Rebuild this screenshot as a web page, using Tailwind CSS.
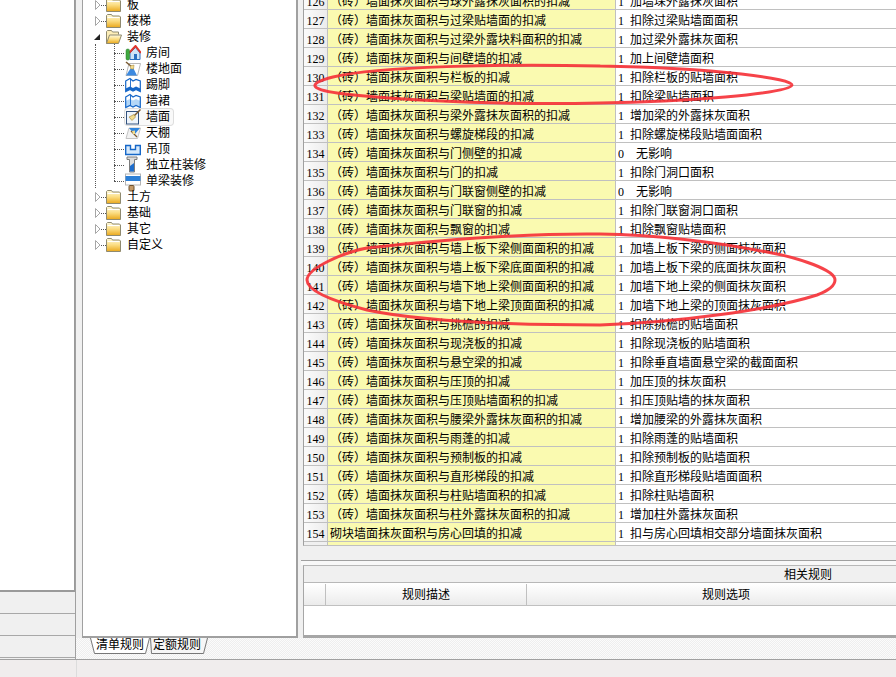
<!DOCTYPE html>
<html lang="zh-CN">
<head>
  <meta charset="UTF-8">
  <title>计算规则</title>
  <script src="https://cdn.jsdelivr.net/npm/@tailwindcss/browser@4"></script>
</head>
<body class="w-[896px] h-[677px] overflow-hidden bg-[#f0f0f0] text-black text-[12px] font-['Liberation_Serif','Noto_Sans_CJK_SC',sans-serif]">

<!-- icon defs -->
<svg class="absolute w-0 h-0">
  <defs>
    <linearGradient id="fold" x1="0" y1="0" x2="0" y2="1">
      <stop offset="0" stop-color="#fffbe0"/><stop offset="0.5" stop-color="#fbdc80"/><stop offset="1" stop-color="#eaa81c"/>
    </linearGradient>
    <symbol id="folder" viewBox="0 0 15 14">
      <path d="M0.5 3V1.5L1.5 .5H5.5L6.5 2H13.5L14.500 3V13.500H0.500Z" fill="url(#fold)" stroke="#8f8a70"/>
      <path d="M1.500 3.500H13.500" stroke="#fff"/>
    </symbol>
    <symbol id="closed" viewBox="0 0 6 10">
      <path d="M.5 .5L5 5L.5 9.500Z" fill="#fff" stroke="#a6a6a6"/>
    </symbol>
    <symbol id="panel" viewBox="0 0 16 16">
      <path d="M.7 4L5 1.500L8 4L11 2.500L15.300 4V14.500L11 12.500L8 14L5 12.500L.7 14.500Z" fill="none" stroke="#1667c8" stroke-width="1.200"/>
      <path d="M5.500 2V12.500" stroke="#1667c8" stroke-width=".9"/>
    </symbol>
  </defs>
</svg>

<div class="flex h-[659px]">
  <!-- left strip -->
  <div class="w-[76px] flex flex-col border-r border-[#a0a0a0]">
    <div class="h-[592px] bg-white border-r border-b-2 border-[#9a9a9a]"></div>
    <div class="h-[22px] border-b border-[#a8a8a8]"></div>
    <div class="h-[22px] border-b border-[#a8a8a8]"></div>
    <div class="h-[22px] border-b border-[#a8a8a8]"></div>
  </div>

  <div class="flex-1 flex flex-col min-w-0">
    <div class="flex h-[638px]">
      <div class="w-[6px] shrink-0 bg-[#f0f0f0]"></div>
      <!-- tree -->
      <div class="relative w-[216px] shrink-0 bg-white border-l border-r-2 border-b-2 border-[#a0a0a0] overflow-hidden">
        <div class="-mt-[3px] relative">
          <!-- dotted guides -->
          <div class="absolute left-[12px] top-[47px] h-[144px] border-l border-dotted border-[#555]"></div>
          <div class="absolute left-[31px] top-[47px] h-[137px] border-l border-dotted border-[#555]"></div>

          <div class="flex items-center h-4 pl-[12px]"><svg class="w-[6px] h-[10px]"><use href="#closed"/></svg><span class="w-[5px] border-t border-dotted border-[#555]"></span><svg class="w-[15px] h-[14px]"><use href="#folder"/></svg><span class="ml-[6px]">板</span></div>
          <div class="flex items-center h-4 pl-[12px]"><svg class="w-[6px] h-[10px]"><use href="#closed"/></svg><span class="w-[5px] border-t border-dotted border-[#555]"></span><svg class="w-[15px] h-[14px]"><use href="#folder"/></svg><span class="ml-[6px]">楼梯</span></div>
          <div class="flex items-center h-4 pl-[10px]">
            <svg class="w-[8px] h-[8px]" viewBox="0 0 8 8"><path d="M7 1V7H1Z" fill="#222"/></svg>
            <span class="w-[5px]"></span>
            <svg class="w-[16px] h-[14px]" viewBox="0 0 16 14"><path d="M.5 13.500V1.500L1.500 .5H5.500L6.500 2H12.500V4.500" fill="#fdeeb8" stroke="#8f8a70"/><path d="M.5 13.500L3.500 5H15.500L12.500 13.500Z" fill="url(#fold)" stroke="#8f8a70"/></svg>
            <span class="ml-[5px]">装修</span>
          </div>

          <!-- 房间 -->
          <div class="flex items-center h-4 pl-[31px]"><span class="w-[10px] border-t border-dotted border-[#555]"></span>
            <svg class="ml-[1px] w-[16px] h-[16px]" viewBox="0 0 16 16"><path d="M5 8L10.500 2.500L15 8V14.500H5Z" fill="#cfe3f7" stroke="#2a6fc0"/><path d="M4 8L10.500 1L16 8" fill="none" stroke="#e0342c" stroke-width="2"/><rect x="9" y="9" width="3" height="5.500" fill="#2a6fc0"/><rect x="1" y="4" width="3.500" height="11" rx="1.500" fill="#3fa83f" stroke="#2b7d2b" stroke-width=".5"/></svg>
            <span class="ml-[5px]">房间</span></div>
          <!-- 楼地面 -->
          <div class="flex items-center h-4 pl-[31px]"><span class="w-[10px] border-t border-dotted border-[#555]"></span>
            <svg class="ml-[1px] w-[16px] h-[16px]" viewBox="0 0 16 16"><path d="M4 2.500H15.500L12.500 14.500H1Z" fill="#fff" stroke="#b8b8b8"/><path d="M5.500 7.500H8.500L12 14.500H1Z" fill="#3d8ae0"/><path d="M1 1L7 6" stroke="#7a5a30" stroke-width="1.500"/><path d="M5 5L9 4L8.500 8L6 8Z" fill="#f2dc8e" stroke="#a08030" stroke-width=".5"/></svg>
            <span class="ml-[5px]">楼地面</span></div>
          <!-- 踢脚 -->
          <div class="flex items-center h-4 pl-[31px]"><span class="w-[10px] border-t border-dotted border-[#555]"></span>
            <svg class="ml-[1px] w-[16px] h-[16px]" viewBox="0 0 16 16"><path d="M.7 11.500L5 9.500L8 11L11 9.500L15.300 11.500V14.500L11 12.500L8 14L5 12.500L.7 14.500Z" fill="#1667c8"/><use href="#panel"/></svg>
            <span class="ml-[5px]">踢脚</span></div>
          <!-- 墙裙 -->
          <div class="flex items-center h-4 pl-[31px]"><span class="w-[10px] border-t border-dotted border-[#555]"></span>
            <svg class="ml-[1px] w-[16px] h-[16px]" viewBox="0 0 16 16"><path d="M.7 8L5 6L8 7.500L11 6L15.300 8V14.500L11 12.500L8 14L5 12.500L.7 14.500Z" fill="#b4d7f7"/><use href="#panel"/></svg>
            <span class="ml-[5px]">墙裙</span></div>
          <!-- 墙面, selected -->
          <div class="flex items-center h-4 pl-[31px]"><span class="w-[10px] border-t border-dotted border-[#555]"></span>
            <div class="ml-[1px] flex items-center h-4 pr-[3px] rounded-[3px] bg-[#f9f9f9] ring-1 ring-[#dedede]">
              <svg class="w-[16px] h-[16px]" viewBox="0 0 16 16"><rect x="1.500" y="2.500" width="12" height="12.500" fill="#eef4fb" stroke="#32527e"/><path d="M15.500 .5L9 7" stroke="#7a5a30" stroke-width="1.500"/><path d="M4 8L9 5.500L10.500 8L7 11.500Z" fill="#f2dc8e" stroke="#a08030" stroke-width=".6"/></svg>
              <span class="ml-[5px]">墙面</span>
            </div></div>
          <!-- 天棚 -->
          <div class="flex items-center h-4 pl-[31px]"><span class="w-[10px] border-t border-dotted border-[#555]"></span>
            <svg class="ml-[1px] w-[16px] h-[16px]" viewBox="0 0 16 16"><path d="M4 3H15.500L12.500 13.500H1Z" fill="#f2f2f2" stroke="#c4c4c4"/><path d="M4 3H15L9.500 9.500Z" fill="#2f85de"/><path d="M6 6L12 12" stroke="#7a5a30" stroke-width="1.200"/><path d="M7 6L10 5.500L10 9L8 9Z" fill="#f2dc8e"/></svg>
            <span class="ml-[5px]">天棚</span></div>
          <!-- 吊顶 -->
          <div class="flex items-center h-4 pl-[31px]"><span class="w-[10px] border-t border-dotted border-[#555]"></span>
            <svg class="ml-[1px] w-[16px] h-[16px]" viewBox="0 0 16 16"><path d="M.7 4.500H5.500V8.500H10.500V4.500H15.300V13.500H.7Z" fill="#d5e8fa" stroke="#1667c8" stroke-width="1.400"/></svg>
            <span class="ml-[5px]">吊顶</span></div>
          <!-- 独立柱装修 -->
          <div class="flex items-center h-4 pl-[31px]"><span class="w-[10px] border-t border-dotted border-[#555]"></span>
            <svg class="ml-[1px] w-[16px] h-[18px] overflow-visible" viewBox="0 0 16 18"><path d="M2 1H12V3.500H9.500V16H4.500V3.500H2Z" fill="#dcdcdc" stroke="#7c7c7c"/><path d="M5 10L9 7V15.500H5Z" fill="#1d6ccb"/></svg>
            <span class="ml-[5px]">独立柱装修</span></div>
          <!-- 单梁装修 -->
          <div class="flex items-center h-4 pl-[31px]"><span class="w-[10px] border-t border-dotted border-[#555]"></span>
            <svg class="ml-[1px] w-[16px] h-[16px] overflow-visible" viewBox="0 0 16 16"><rect x=".5" y="1" width="15" height="11" fill="#fff" stroke="#b4b4b4"/><rect x=".5" y="3" width="15" height="5" fill="#2c7fd6"/><rect x="4" y="12.500" width="5" height="5.500" rx="1" fill="#c49a68" stroke="#6d5230"/></svg>
            <span class="ml-[5px]">单梁装修</span></div>

          <div class="flex items-center h-4 pl-[12px]"><svg class="w-[6px] h-[10px]"><use href="#closed"/></svg><span class="w-[5px] border-t border-dotted border-[#555]"></span><svg class="w-[15px] h-[14px]"><use href="#folder"/></svg><span class="ml-[6px]">土方</span></div>
          <div class="flex items-center h-4 pl-[12px]"><svg class="w-[6px] h-[10px]"><use href="#closed"/></svg><span class="w-[5px] border-t border-dotted border-[#555]"></span><svg class="w-[15px] h-[14px]"><use href="#folder"/></svg><span class="ml-[6px]">基础</span></div>
          <div class="flex items-center h-4 pl-[12px]"><svg class="w-[6px] h-[10px]"><use href="#closed"/></svg><span class="w-[5px] border-t border-dotted border-[#555]"></span><svg class="w-[15px] h-[14px]"><use href="#folder"/></svg><span class="ml-[6px]">其它</span></div>
          <div class="flex items-center h-4 pl-[12px]"><svg class="w-[6px] h-[10px]"><use href="#closed"/></svg><span class="w-[5px] border-t border-dotted border-[#555]"></span><svg class="w-[15px] h-[14px]"><use href="#folder"/></svg><span class="ml-[6px]">自定义</span></div>
        </div>
      </div>

      <!-- right side -->
      <div class="flex-1 min-w-0 flex flex-col pl-[5px]">
        <!-- rule grid -->
        <div class="h-[546px] shrink-0 overflow-hidden border-l border-[#a0a0a0] border-b border-b-[#c0c0c0] bg-[#f0f0f0]">
          <div class="-mt-[9px]" id="rows"></div>
          <div class="flex h-[3px]"><div class="w-[24px] shrink-0 border-r border-[#c0c0c0]"></div><div class="w-[288px] shrink-0 bg-[#fafab0] border-r border-[#c0c0c0]"></div><div class="flex-1 bg-white"></div></div>
        </div>
        <div class="h-[14px] shrink-0"></div>
        <div class="h-[1px] shrink-0 -ml-[2px] bg-[#a0a0a0]"></div>
        <div class="h-[4px] shrink-0 bg-[#f8f8f8] -ml-[2px]"></div>
        <!-- related rules -->
        <div class="flex-1 flex flex-col border-l border-t border-b-[3px] border-[#a6a6a6] border-t-[#b8b8b8] bg-white">
          <div class="h-[17px] shrink-0 bg-[#f0f0f0] pl-[480px] leading-[18px] border-b border-[#b8b8b8] whitespace-nowrap">相关规则</div>
          <div class="h-[22px] shrink-0 mt-[1px] flex border-b border-[#c0c0c0] bg-gradient-to-b from-white to-[#ebebeb]">
            <div class="w-[22px] shrink-0 border-r border-[#c0c0c0]"></div>
            <div class="w-[201px] shrink-0 border-r border-[#c0c0c0] text-center leading-[23px]">规则描述</div>
            <div class="w-[398px] shrink-0 text-center leading-[23px]">规则选项</div>
          </div>
        </div>
      </div>
    </div>

    <!-- sheet tabs -->
    <div class="relative h-[21px] bg-[repeating-conic-gradient(#eeeeee_0_25%,#fbfbfb_0_50%)] bg-[length:2px_2px]">
      <div class="flex pl-[14px]">
        <div class="relative w-[62px] h-[16px]">
          <svg class="absolute inset-0" width="62" height="16"><path d="M.5 0L4.500 15.500H55.500L59.500 0" fill="#fff" stroke="#777"/></svg>
          <span class="relative block pl-[6px] leading-[15px]">清单规则</span>
        </div>
        <div class="relative w-[62px] h-[16px] -ml-[5px]">
          <svg class="absolute inset-0" width="62" height="16"><path d="M3.500 0L4.500 15.500H56.500L60.500 0" fill="#f6f6f6" stroke="#777"/></svg>
          <span class="relative block pl-[6px] leading-[15px]">定额规则</span>
        </div>
      </div>
    </div>
  </div>
</div>

<!-- status bar -->
<div class="h-[18px] flex bg-[#f0eded] border-t border-[#a0a0a0]">
  <div class="w-[77px] border-r border-[#dcdcdc]"></div>
</div>

<!-- hand-drawn red marks -->
<svg class="absolute left-0 top-0 pointer-events-none" width="896" height="677" fill="none" stroke="#f5333a" stroke-opacity="0.92" stroke-width="3" stroke-linecap="round">
  <path d="M600 66C500 64 380 66 333 77C305 84 310 90 345 94C420 102 520 105 600 103C680 102 790 94 792 85C793 79 720 68 600 66"/>
  <path d="M600 234C520 233 440 240 367 248C345 252 307 268 307 280C307 292 340 303 367 310C400 317 470 325 600 325C680 322 770 310 817 295C830 290 835 285 835 280C835 270 800 258 767 252C720 243 660 235 600 234"/>
</svg>

<script>
  // rule rows: [no, yellow column, flag, description]
  var P = '（砖）墙面抹灰面积与';
  var data = [
    [126, P + '球外露抹灰面积的扣减', 1, '加墙垛外露抹灰面积'],
    [127, P + '过梁贴墙面的扣减', 1, '扣除过梁贴墙面面积'],
    [128, P + '过梁外露块料面积的扣减', 1, '加过梁外露抹灰面积'],
    [129, P + '间壁墙的扣减', 1, '加上间壁墙面积'],
    [130, P + '栏板的扣减', 1, '扣除栏板的贴墙面积'],
    [131, P + '梁贴墙面的扣减', 1, '扣除梁贴墙面积'],
    [132, P + '梁外露抹灰面积的扣减', 1, '增加梁的外露抹灰面积'],
    [133, P + '螺旋梯段的扣减', 1, '扣除螺旋梯段贴墙面面积'],
    [134, P + '门侧壁的扣减', 0, '无影响'],
    [135, P + '门的扣减', 1, '扣除门洞口面积'],
    [136, P + '门联窗侧壁的扣减', 0, '无影响'],
    [137, P + '门联窗的扣减', 1, '扣除门联窗洞口面积'],
    [138, P + '飘窗的扣减', 1, '扣除飘窗贴墙面积'],
    [139, P + '墙上板下梁侧面面积的扣减', 1, '加墙上板下梁的侧面抹灰面积'],
    [140, P + '墙上板下梁底面面积的扣减', 1, '加墙上板下梁的底面抹灰面积'],
    [141, P + '墙下地上梁侧面面积的扣减', 1, '加墙下地上梁的侧面抹灰面积'],
    [142, P + '墙下地上梁顶面面积的扣减', 1, '加墙下地上梁的顶面抹灰面积'],
    [143, P + '挑檐的扣减', 1, '扣除挑檐的贴墙面积'],
    [144, P + '现浇板的扣减', 1, '扣除现浇板的贴墙面积'],
    [145, P + '悬空梁的扣减', 1, '扣除垂直墙面悬空梁的截面面积'],
    [146, P + '压顶的扣减', 1, '加压顶的抹灰面积'],
    [147, P + '压顶贴墙面积的扣减', 1, '扣压顶贴墙的抹灰面积'],
    [148, P + '腰梁外露抹灰面积的扣减', 1, '增加腰梁的外露抹灰面积'],
    [149, P + '雨蓬的扣减', 1, '扣除雨蓬的贴墙面积'],
    [150, P + '预制板的扣减', 1, '扣除预制板的贴墙面积'],
    [151, P + '直形梯段的扣减', 1, '扣除直形梯段贴墙面面积'],
    [152, P + '柱贴墙面积的扣减', 1, '扣除柱贴墙面积'],
    [153, P + '柱外露抹灰面积的扣减', 1, '增加柱外露抹灰面积'],
    [154, '砌块墙面抹灰面积与房心回填的扣减', 1, '扣与房心回填相交部分墙面抹灰面积']
  ];
  var html = '';
  data.forEach(function(r) {
    var gap = r[2] === 0 ? 'pl-[12px]' : 'pl-[6px]';
    html += '<div class="flex h-[19px] border-b border-[#c0c0c0] leading-[22px]">'
      + '<div class="w-[24px] shrink-0 text-center bg-gradient-to-r from-[#fbfbfb] to-[#ececec] border-r border-[#c0c0c0]">' + r[0] + '</div>'
      + '<div class="w-[288px] shrink-0 pl-[2px] bg-[#fafab0] border-r border-[#c0c0c0] whitespace-nowrap">' + r[1] + '</div>'
      + '<div class="flex-1 pl-[2px] bg-white whitespace-nowrap"><span>' + r[2] + '</span><span class="' + gap + '">' + r[3] + '</span></div>'
      + '</div>';
  });
  document.getElementById('rows').innerHTML = html;
</script>
</body>
</html>
